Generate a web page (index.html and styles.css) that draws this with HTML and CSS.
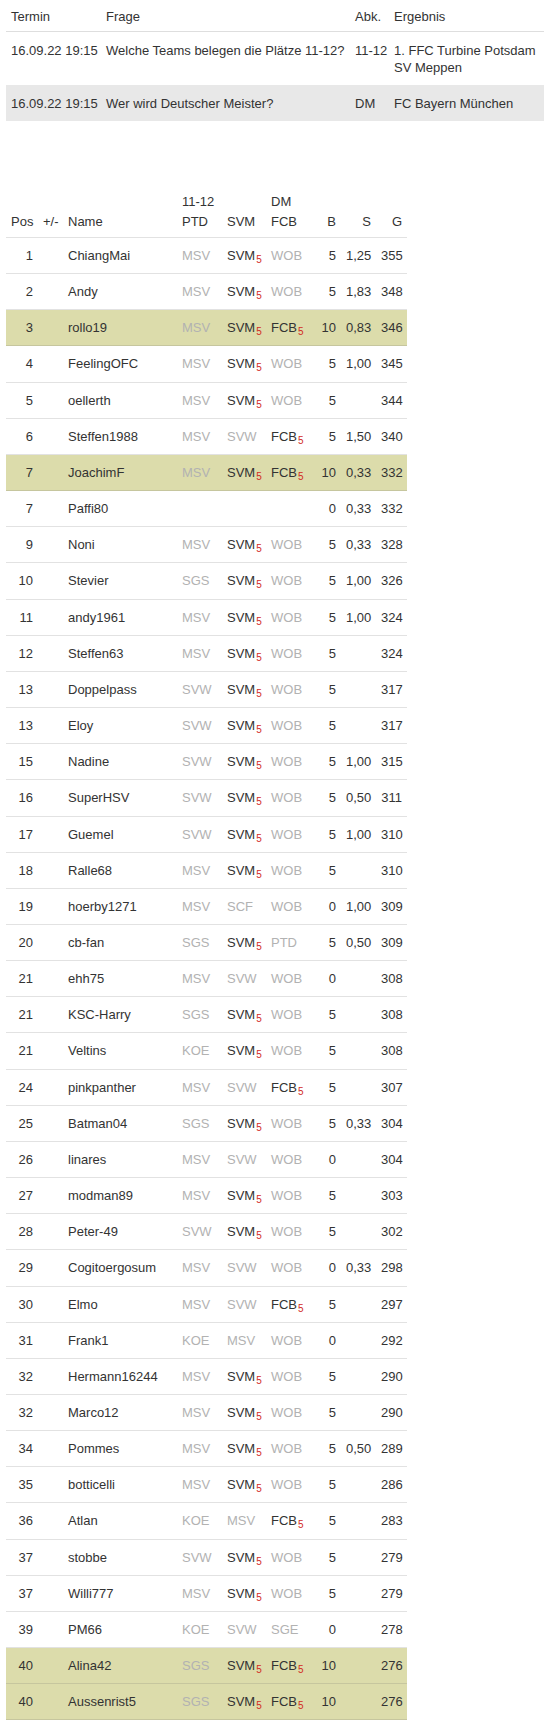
FILE: index.html
```html
<!DOCTYPE html>
<html lang="de">
<head>
<meta charset="utf-8">
<title>Tipps</title>
<link rel="stylesheet" href="styles.css">
</head>
<body>
<div class="page">
  <table class="fragen">
    <colgroup>
      <col class="c-termin"><col class="c-frage"><col class="c-abk"><col class="c-erg">
    </colgroup>
    <thead>
      <tr><th>Termin</th><th>Frage</th><th>Abk.</th><th>Ergebnis</th></tr>
    </thead>
    <tbody>
      <tr><td>16.09.22 19:15</td><td>Welche Teams belegen die Plätze 11-12?</td><td>11-12</td><td>1. FFC Turbine Potsdam<br>SV Meppen</td></tr>
      <tr class="alt"><td>16.09.22 19:15</td><td>Wer wird Deutscher Meister?</td><td>DM</td><td>FC Bayern München</td></tr>
    </tbody>
  </table>

  <table class="rang">
    <colgroup>
      <col class="c-pos"><col class="c-pm"><col class="c-name"><col class="c-t1"><col class="c-t2"><col class="c-t3"><col class="c-b"><col class="c-s"><col class="c-g">
    </colgroup>
    <thead>
      <tr>
        <th class="r">Pos</th><th>+/-</th><th>Name</th><th>11-12<br>PTD</th><th>SVM</th><th>DM<br>FCB</th><th class="r">B</th><th class="r">S</th><th class="r">G</th>
      </tr>
    </thead>
    <tbody id="rows"></tbody>
  </table>
</div>
<script src="app.js"></script>
</body>
</html>
```

FILE: styles.css
```css
html, body {
  margin: 0;
  padding: 0;
  background: #fff;
}
body {
  font-family: "Liberation Sans", Arial, sans-serif;
  font-size: 13px;
  color: #333;
}
.page {
  padding-left: 6px;
}
table {
  border-collapse: collapse;
  border-spacing: 0;
  table-layout: fixed;
}
th {
  font-weight: normal;
  text-align: left;
}

/* Fragen-Tabelle */
.fragen {
  width: 538px;
}
.c-termin { width: 95px; }
.c-frage { width: 249px; }
.c-abk { width: 39px; }
.c-erg { width: 155px; }
.fragen th {
  padding: 8px 4px 6px 5px;
  line-height: 17px;
  border-bottom: 1px solid #dedede;
  white-space: nowrap;
}
.fragen td {
  padding: 10px 4px 9px 5px;
  line-height: 17px;
  vertical-align: top;
  white-space: nowrap;
}
.fragen tr.alt td {
  background: #e8e8e8;
}

/* Rangliste */
.rang {
  margin-top: 66px;
  width: 401px;
}
.c-pos { width: 32px; }
.c-pm { width: 25px; }
.c-name { width: 114px; }
.c-t1 { width: 45px; }
.c-t2 { width: 44px; }
.c-t3 { width: 44px; }
.c-b { width: 31px; }
.c-s { width: 35px; }
.c-g { width: 31px; }

.rang th {
  padding: 5px 5px 5px 5px;
  line-height: 20px;
  vertical-align: bottom;
  border-bottom: 1px solid #e2e2e2;
  white-space: nowrap;
}
.rang td {
  padding: 9px 5px;
  line-height: 17.15px;
  border-bottom: 1px solid #e2e2e2;
  white-space: nowrap;
}
.rang .r { text-align: right; }
.rang tr.hl td {
  background: #dcdcab;
  border-bottom-color: #c6c69e;
}
.off { color: #b2b2b2; }
.on { color: #333; }
.pts {
  color: #d22a1f;
  font-size: 10px;
  line-height: 0;
  vertical-align: -3px;
  margin-left: 1px;
}
```

FILE: app.js
```js
var data = [
  ["1","ChiangMai","MSV","SVM5","WOB","5","1,25","355",0],
  ["2","Andy","MSV","SVM5","WOB","5","1,83","348",0],
  ["3","rollo19","MSV","SVM5","FCB5","10","0,83","346",1],
  ["4","FeelingOFC","MSV","SVM5","WOB","5","1,00","345",0],
  ["5","oellerth","MSV","SVM5","WOB","5","","344",0],
  ["6","Steffen1988","MSV","SVW","FCB5","5","1,50","340",0],
  ["7","JoachimF","MSV","SVM5","FCB5","10","0,33","332",1],
  ["7","Paffi80","","","","0","0,33","332",0],
  ["9","Noni","MSV","SVM5","WOB","5","0,33","328",0],
  ["10","Stevier","SGS","SVM5","WOB","5","1,00","326",0],
  ["11","andy1961","MSV","SVM5","WOB","5","1,00","324",0],
  ["12","Steffen63","MSV","SVM5","WOB","5","","324",0],
  ["13","Doppelpass","SVW","SVM5","WOB","5","","317",0],
  ["13","Eloy","SVW","SVM5","WOB","5","","317",0],
  ["15","Nadine","SVW","SVM5","WOB","5","1,00","315",0],
  ["16","SuperHSV","SVW","SVM5","WOB","5","0,50","311",0],
  ["17","Guemel","SVW","SVM5","WOB","5","1,00","310",0],
  ["18","Ralle68","MSV","SVM5","WOB","5","","310",0],
  ["19","hoerby1271","MSV","SCF","WOB","0","1,00","309",0],
  ["20","cb-fan","SGS","SVM5","PTD","5","0,50","309",0],
  ["21","ehh75","MSV","SVW","WOB","0","","308",0],
  ["21","KSC-Harry","SGS","SVM5","WOB","5","","308",0],
  ["21","Veltins","KOE","SVM5","WOB","5","","308",0],
  ["24","pinkpanther","MSV","SVW","FCB5","5","","307",0],
  ["25","Batman04","SGS","SVM5","WOB","5","0,33","304",0],
  ["26","linares","MSV","SVW","WOB","0","","304",0],
  ["27","modman89","MSV","SVM5","WOB","5","","303",0],
  ["28","Peter-49","SVW","SVM5","WOB","5","","302",0],
  ["29","Cogitoergosum","MSV","SVW","WOB","0","0,33","298",0],
  ["30","Elmo","MSV","SVW","FCB5","5","","297",0],
  ["31","Frank1","KOE","MSV","WOB","0","","292",0],
  ["32","Hermann16244","MSV","SVM5","WOB","5","","290",0],
  ["32","Marco12","MSV","SVM5","WOB","5","","290",0],
  ["34","Pommes","MSV","SVM5","WOB","5","0,50","289",0],
  ["35","botticelli","MSV","SVM5","WOB","5","","286",0],
  ["36","Atlan","KOE","MSV","FCB5","5","","283",0],
  ["37","stobbe","SVW","SVM5","WOB","5","","279",0],
  ["37","Willi777","MSV","SVM5","WOB","5","","279",0],
  ["39","PM66","KOE","SVW","SGE","0","","278",0],
  ["40","Alina42","SGS","SVM5","FCB5","10","","276",1],
  ["40","Aussenrist5","SGS","SVM5","FCB5","10","","276",1]
];

function tip(v) {
  if (!v) return "";
  if (/5$/.test(v) && v.length === 4) {
    return '<span class="on">' + v.slice(0, 3) + '<span class="pts">5</span></span>';
  }
  return '<span class="off">' + v + '</span>';
}

var html = "";
data.forEach(function (d) {
  html += '<tr' + (d[8] ? ' class="hl"' : '') + '>' +
    '<td class="r">' + d[0] + '</td>' +
    '<td></td>' +
    '<td>' + d[1] + '</td>' +
    '<td>' + tip(d[2]) + '</td>' +
    '<td>' + tip(d[3]) + '</td>' +
    '<td>' + tip(d[4]) + '</td>' +
    '<td class="r">' + d[5] + '</td>' +
    '<td class="r">' + d[6] + '</td>' +
    '<td class="r">' + d[7] + '</td>' +
    '</tr>';
});
document.getElementById("rows").innerHTML = html;
```
